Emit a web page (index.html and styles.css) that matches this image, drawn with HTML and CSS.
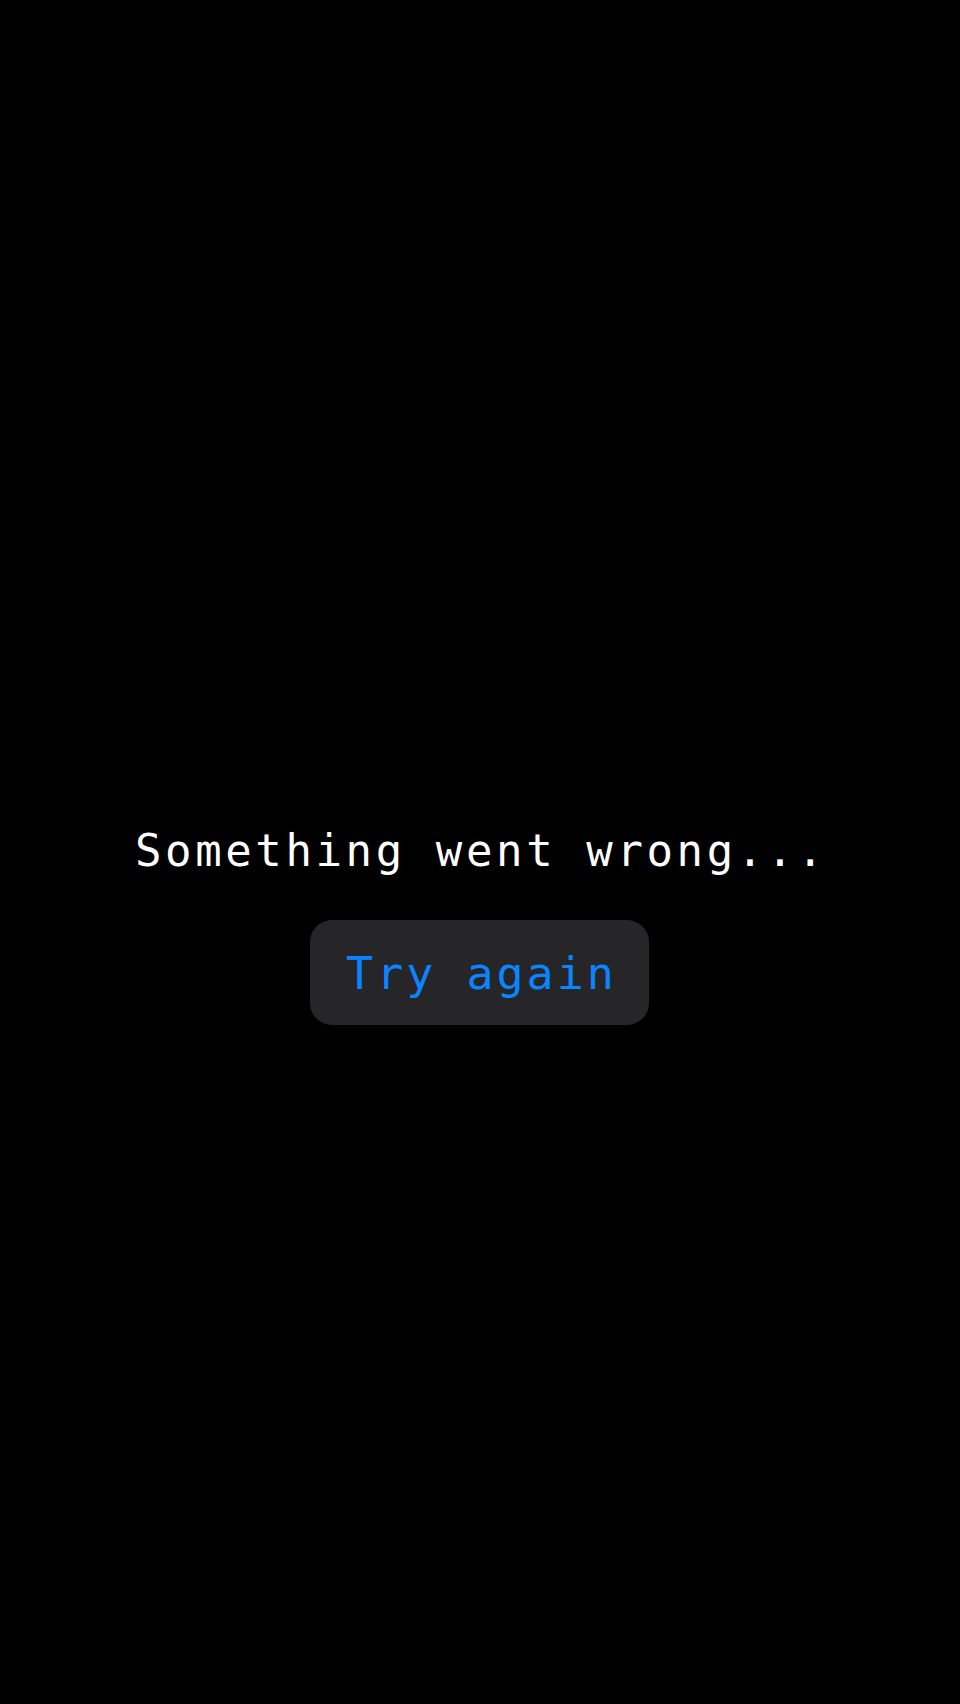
FILE: index.html
```html
<!DOCTYPE html>
<html lang="en">
<head>
<meta charset="utf-8">
<title>Error</title>
<link rel="stylesheet" href="styles.css">
</head>
<body>
<main class="screen">
  <div class="error">
    <p class="error-title">Something went wrong...</p>
    <button class="retry" type="button">Try again</button>
  </div>
</main>
</body>
</html>
```

FILE: styles.css
```css
html, body {
  margin: 0;
  padding: 0;
  background: #000;
}
.screen {
  box-sizing: border-box;
  min-height: 1704px;
  padding-top: 143px;
  display: flex;
  flex-direction: column;
  align-items: center;
  justify-content: center;
  font-family: "DejaVu Sans Mono", "Liberation Mono", monospace;
}
.error {
  display: flex;
  flex-direction: column;
  align-items: center;
  gap: 41px;
}
.error-title {
  margin: 0;
  padding-left: 2px;
  color: #fff;
  font-size: 44px;
  letter-spacing: 3.6px;
  line-height: 57px;
  white-space: nowrap;
}
.retry {
  font-family: inherit;
  font-size: 45px;
  letter-spacing: 3px;
  line-height: 57px;
  color: #0a84ff;
  background: #262628;
  border: none;
  border-radius: 22px;
  padding: 25px 0 23px 3px;
  width: 339px;
  cursor: pointer;
}
```
